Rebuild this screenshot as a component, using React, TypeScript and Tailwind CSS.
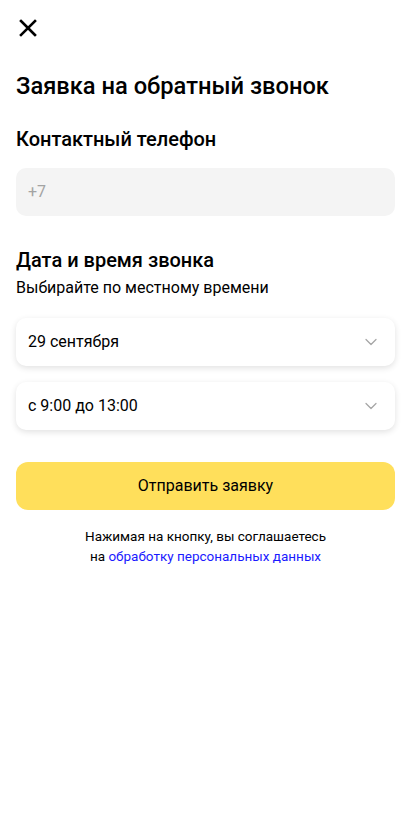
import { ChevronDown } from "lucide-react";

function SelectBox({ value }: { value: string }) {
  return (
    <div className="flex h-12 items-center justify-between rounded-[10px] bg-white pl-3 pr-[14px] shadow-[0_2px_6px_rgba(0,0,0,0.12)]">
      <span className="text-[16px] text-black">{value}</span>
      <ChevronDown className="h-5 w-5 text-[#a6a6a6]" strokeWidth={1.5} />
    </div>
  );
}

export default function App() {
  return (
    <div
      className="min-h-[823px] bg-white px-4 text-black"
      style={{ fontFamily: "Roboto, 'Noto Sans', sans-serif" }}
    >
      {/* Close */}
      <div className="flex h-14 items-center">
        <svg width="18" height="18" viewBox="0 0 18 18" className="ml-[3px]">
          <path d="M2 2L16 16M16 2L2 16" stroke="#000" strokeWidth="2.6" strokeLinecap="square" />
        </svg>
      </div>

      <h1 className="mt-[14px] text-[23.7px] leading-8 font-medium">Заявка на обратный звонок</h1>

      <h2 className="mt-[23px] text-[20px] leading-7 font-medium">Контактный телефон</h2>
      <div className="mt-[15px] flex h-12 items-center rounded-[10px] bg-[#f4f4f4] px-3">
        <span className="text-[16px] text-[#a3a3a3]">+7</span>
      </div>

      <h2 className="mt-[30px] text-[20px] leading-7 font-medium">Дата и время звонка</h2>
      <p className="text-[16px] leading-7">Выбирайте по местному времени</p>

      <div className="mt-4 flex flex-col gap-4">
        <SelectBox value="29 сентября" />
        <SelectBox value="с 9:00 до 13:00" />
      </div>

      <button className="mt-8 flex h-12 w-full items-center justify-center rounded-[12px] bg-[#ffdf5b] text-[16px] text-black">
        Отправить заявку
      </button>

      <p className="mt-4 text-center text-[13.5px] leading-5">
        Нажимая на кнопку, вы соглашаетесь
        <br />
        на <span className="text-[#1a1aff]">обработку персональных данных</span>
      </p>
    </div>
  );
}
